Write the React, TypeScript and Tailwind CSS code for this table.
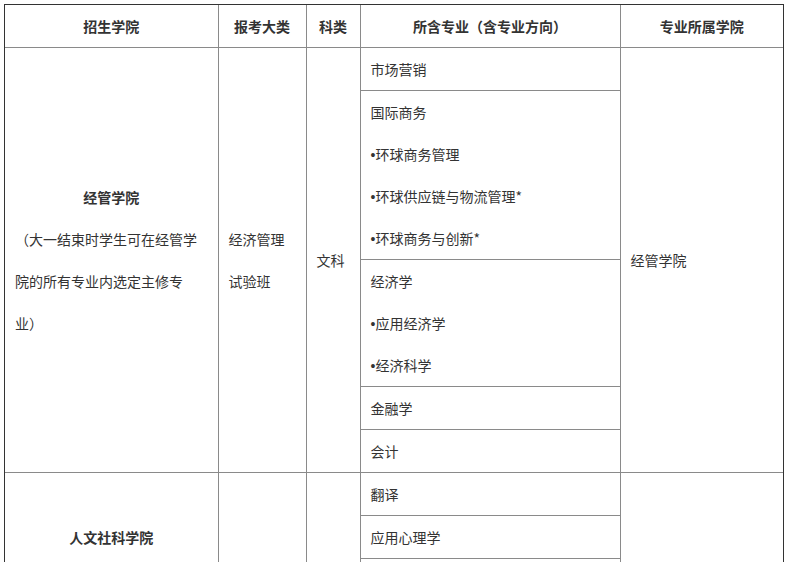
import React from 'react'

const cell = 'border border-[#8a8a8a] px-[10px] py-0 align-middle'

function Dot() {
  return <span className="leading-none [font-family:'Liberation_Sans',sans-serif]">•</span>
}

export default function App() {
  return (
    <div className="min-h-screen bg-white pl-[4px] pt-[4px] text-[14px] leading-[42px] text-[#333] [font-family:'Noto_Sans_CJK_SC',sans-serif] [text-spacing-trim:space-all]">
      <div className="w-[780px] border border-[#333]">
        <table className="w-[778px] table-fixed border-collapse border-hidden">
          <colgroup>
            <col className="w-[213px]" />
            <col className="w-[88px]" />
            <col className="w-[54px]" />
            <col className="w-[260px]" />
            <col className="w-[163px]" />
          </colgroup>
          <thead>
            <tr className="font-bold">
              <th className={`${cell} text-center`}>招生学院</th>
              <th className={`${cell} text-center`}>报考大类</th>
              <th className={`${cell} text-center`}>科类</th>
              <th className={`${cell} text-center`}>所含专业（含专业方向）</th>
              <th className={`${cell} text-center`}>专业所属学院</th>
            </tr>
          </thead>
          <tbody>
            <tr>
              <td rowSpan={5} className={cell}>
                <p className="text-center font-bold">经管学院</p>
                <p>（大一结束时学生可在经管学院的所有专业内选定主修专业）</p>
              </td>
              <td rowSpan={5} className={cell}>经济管理试验班</td>
              <td rowSpan={5} className={cell}>文科</td>
              <td className={cell}>市场营销</td>
              <td rowSpan={5} className={cell}>经管学院</td>
            </tr>
            <tr>
              <td className={cell}>
                <p>国际商务</p>
                <p><Dot />环球商务管理</p>
                <p><Dot />环球供应链与物流管理*</p>
                <p><Dot />环球商务与创新*</p>
              </td>
            </tr>
            <tr>
              <td className={cell}>
                <p>经济学</p>
                <p><Dot />应用经济学</p>
                <p><Dot />经济科学</p>
              </td>
            </tr>
            <tr>
              <td className={cell}>金融学</td>
            </tr>
            <tr>
              <td className={cell}>会计</td>
            </tr>
            <tr>
              <td rowSpan={3} className={`${cell} text-center font-bold`}>人文社科学院</td>
              <td rowSpan={3} className={cell}></td>
              <td rowSpan={3} className={cell}></td>
              <td className={cell}>翻译</td>
              <td rowSpan={3} className={cell}></td>
            </tr>
            <tr>
              <td className={cell}>应用心理学</td>
            </tr>
            <tr>
              <td className={cell}>社会工作</td>
            </tr>
          </tbody>
        </table>
      </div>
    </div>
  )
}
